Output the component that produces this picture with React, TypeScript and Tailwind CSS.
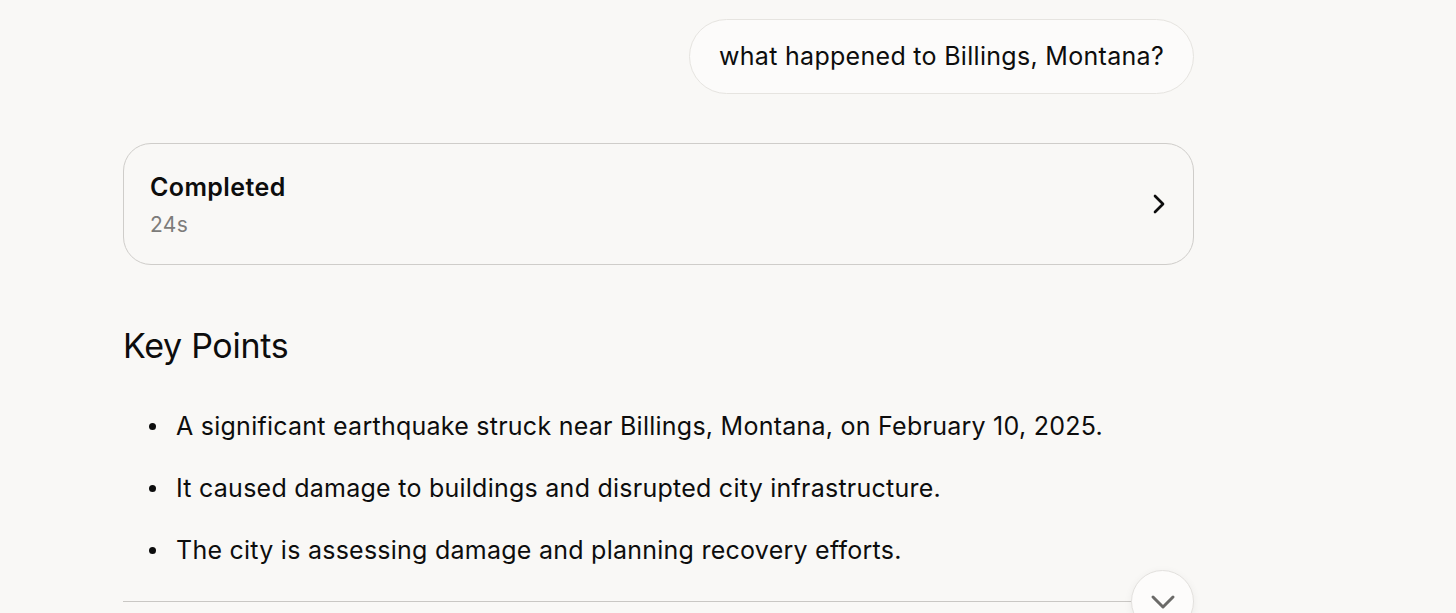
import { ChevronDown, ChevronRight } from 'lucide-react'

const points = [
  'A significant earthquake struck near Billings, Montana, on February 10, 2025.',
  'It caused damage to buildings and disrupted city infrastructure.',
  'The city is assessing damage and planning recovery efforts.',
]

export default function App() {
  return (
    <div
      className="h-[613px] w-[1456px] overflow-hidden bg-[#f9f8f6] text-[#0d0d0d]"
      style={{ fontFamily: 'Inter, "Noto Sans", sans-serif' }}
    >
      <div className="relative ml-[123px] w-[1071px]">
        <div className="flex justify-end pt-[19px]">
          <div className="flex h-[75px] items-center rounded-full border border-[#e6e4e0] bg-[#fcfbfa] px-[29px] text-[25px] tracking-[0.3px]">
            what happened to Billings, Montana?
          </div>
        </div>

        <button className="mt-[49px] flex h-[122px] w-full items-center justify-between rounded-[28px] border border-[#cfcdca] bg-[#f9f8f6] pl-[26px] pr-[18px] text-left">
          <div className="flex flex-col">
            <span className="text-[25px] font-semibold leading-[32px] tracking-[0.4px]">Completed</span>
            <span className="mt-[9px] text-[21px] leading-[26px] tracking-[0.3px] text-[#7d7c7a]">24s</span>
          </div>
          <ChevronRight className="h-[32px] w-[32px] text-[#0d0d0d]" strokeWidth={2} />
        </button>

        <h2 className="mt-[59px] text-[34px] leading-[44px] tracking-[-0.3px]">Key Points</h2>

        <ul className="mt-[40px] flex flex-col gap-[26px] pl-[26px]">
          {points.map((p) => (
            <li key={p} className="flex items-center text-[25px] leading-[36px] tracking-[0.25px]">
              <span className="mr-[20px] h-[7px] w-[7px] shrink-0 rounded-full bg-[#0d0d0d]" />
              {p}
            </li>
          ))}
        </ul>

        <div className="mt-[33px] h-px w-full bg-[#c9c7c4]" />

        <button className="absolute right-0 top-[570px] flex h-[63px] w-[63px] items-center justify-center rounded-full border border-[#e3e1de] bg-[#fdfcfb] shadow-[0_2px_8px_rgba(0,0,0,0.06)]">
          <ChevronDown className="h-[40px] w-[40px] text-[#6b6a68]" strokeWidth={1.8} />
        </button>
      </div>
    </div>
  )
}
